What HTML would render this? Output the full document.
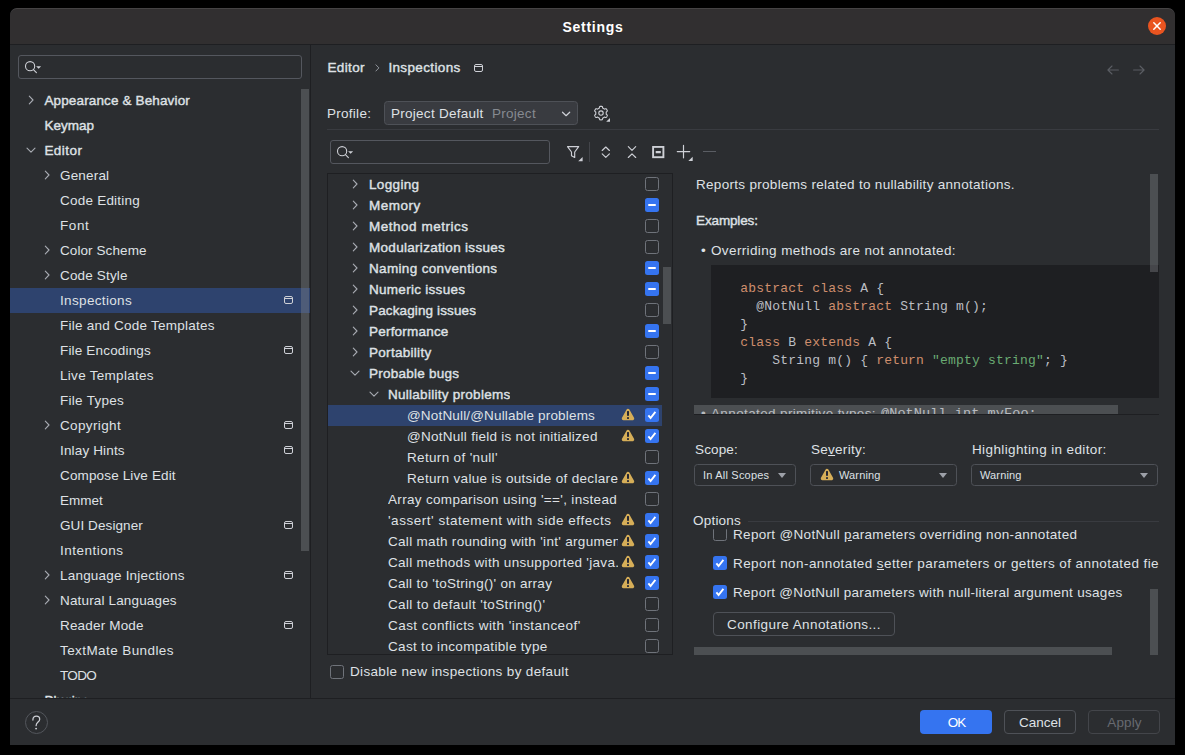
<!DOCTYPE html>
<html><head><meta charset="utf-8"><title>Settings</title>
<style>
*{box-sizing:border-box;margin:0;padding:0}
html,body{width:1185px;height:755px;background:#000;overflow:hidden}
body{font-family:"Liberation Sans",sans-serif;font-size:13.5px;color:#dfe1e5;position:relative}
#w{position:absolute;left:10px;top:8px;width:1165px;height:737px;background:#2b2d30;border-radius:7px 7px 0 0;overflow:hidden}
#p{position:absolute;left:-10px;top:-8px;width:1185px;height:755px}
#p>*{position:absolute}
.abs{position:absolute}
#tb{left:10px;top:8px;width:1165px;height:36px;background:#312f30;border-top:1px solid #454344;border-radius:7px 7px 0 0}
#tbl{left:10px;top:44px;width:1165px;height:1px;background:#1e1f22}
#title{left:10px;top:9px;width:1165px;height:36px;line-height:37px;text-align:center;font-weight:bold;font-size:14px;color:#fff;letter-spacing:0.72px;padding-left:1px}
#close{left:1148px;top:17px;width:18px;height:18px;border-radius:50%;background:#e95420}
.t{white-space:pre;line-height:16px;height:16px;letter-spacing:0.27px}
.b{font-weight:normal;font-size:13.5px;-webkit-text-stroke:0.4px currentColor}
/* sidebar */
#side{left:10px;top:45px;width:300px;height:653px;overflow:hidden}
.srow{position:absolute;left:0;width:300px;height:25px;margin-top:-1px}
.srow.sel{background:#2e436e}
.srow .st{position:absolute;top:0;line-height:25px;white-space:pre;letter-spacing:0.27px}
.srow.b .st{letter-spacing:-0.08px}
.chev,.pi,.warn{position:absolute}
#sdiv{left:310px;top:45px;width:1px;height:653px;background:#1e1f22}
#sscroll{left:301px;top:89px;width:8px;height:462px;background:rgba(128,130,136,0.40)}
.search{border:1px solid #54575e;border-radius:3px;background:#2b2d30}
/* tree */
#tree{left:327px;top:173px;width:346px;height:482px;border:1px solid #1e1f22;overflow:hidden}
#treein{position:absolute;left:0;top:0;width:344px;height:480px;overflow:hidden}
.trow{position:absolute;left:0;width:334px;height:21px}
.trow.sel{background:#2e436e}
.trow .tt{position:absolute;top:0;line-height:21px;white-space:pre;overflow:hidden;letter-spacing:0.27px;height:21px}
.trow.b .tt{letter-spacing:-0.05px}
.cb{position:absolute;width:14px;height:14px;border-radius:2.5px;display:block}
.cb.rel{position:relative;display:inline-block}
.c0{border:1px solid #6f737a;background:transparent}
.c1,.c2{background:#3574f0}
.c1 i{position:absolute;left:3px;top:6px;width:8px;height:2px;background:#fff;border-radius:1px}
.c2 svg{position:absolute;left:0;top:0}
#tscroll{left:663px;top:267px;width:8px;height:57px;background:rgba(128,130,136,0.40)}
/* combos */
.combo{border:1px solid #4e5157;border-radius:3.5px;background:#2b2d30}
.combo .ct{position:absolute;top:0;white-space:pre}
.tri{position:absolute;width:0;height:0;border-left:4.5px solid transparent;border-right:4.5px solid transparent;border-top:5.5px solid #9da0a8}
.btn{border:1px solid #4e5157;border-radius:4px;text-align:center;letter-spacing:0.5px}
.hline{background:#393b40;height:1px}
.sb{background:rgba(128,130,136,0.40)}
/* code */
#code{left:711px;top:265px;width:448px;height:133px;background:#1e1f22}
#code pre{position:absolute;left:29.3px;top:14.6px;font-family:"Liberation Mono",monospace;font-size:13px;line-height:18px;color:#bcbec4;letter-spacing:0.19px}
.k{color:#cf8e6d}.s{color:#6aab73}
</style></head><body>
<div id="w"><div id="p">
<div id="tb"></div><div id="tbl"></div>
<div id="title">Settings</div>
<div id="close"><svg width="18" height="18" viewBox="0 0 18 18" style="position:absolute;left:0;top:0"><path d="M5.8 5.8 L12.2 12.2" stroke="#fff" stroke-width="1.5" stroke-linecap="round" fill="none"/><path d="M12.2 5.8 L5.8 12.2" stroke="#fff" stroke-width="1.5" stroke-linecap="round" fill="none"/></svg></div>

<!-- sidebar search -->
<div class="search" style="left:18px;top:55px;width:284px;height:24px"></div>
<svg style="left:24px;top:60px" width="18" height="15" viewBox="0 0 18 15"><circle cx="6.1" cy="6.2" r="4.6" fill="none" stroke="#ced0d6" stroke-width="1.1"/><path d="M9.4 9.6 L12.4 12.6" stroke="#ced0d6" stroke-width="1.1" stroke-linecap="round"/><path d="M12.1 6.2 H17.1 L14.6 8.8 Z" fill="#ced0d6"/></svg>

<div id="side">
<div class="srow b" style="top:44px"><svg class="chev" width="7" height="10" viewBox="0 0 7 10" style="left:18px;top:7px"><path d="M1.3 1.2 L5.0 5 L1.3 8.8" fill="none" stroke="#a8abb2" stroke-width="1.1" stroke-linecap="round" stroke-linejoin="round"/></svg><span class="st" style="left:34.4px;letter-spacing:0.140px">Appearance &amp; Behavior</span></div>
<div class="srow b" style="top:69px"><span class="st" style="left:34.4px;letter-spacing:0.034px">Keymap</span></div>
<div class="srow b" style="top:94px"><svg class="chev" width="10" height="7" viewBox="0 0 10 7" style="left:16px;top:9px"><path d="M1 1.2 L5 5.2 L9 1.2" fill="none" stroke="#a8abb2" stroke-width="1.1" stroke-linecap="round" stroke-linejoin="round"/></svg><span class="st" style="left:34.4px;letter-spacing:0.464px">Editor</span></div>
<div class="srow" style="top:119px"><svg class="chev" width="7" height="10" viewBox="0 0 7 10" style="left:34px;top:7px"><path d="M1.3 1.2 L5.0 5 L1.3 8.8" fill="none" stroke="#a8abb2" stroke-width="1.1" stroke-linecap="round" stroke-linejoin="round"/></svg><span class="st" style="left:50px;letter-spacing:0.178px">General</span></div>
<div class="srow" style="top:144px"><span class="st" style="left:50px;letter-spacing:0.226px">Code Editing</span></div>
<div class="srow" style="top:169px"><span class="st" style="left:50px;letter-spacing:0.595px">Font</span></div>
<div class="srow" style="top:194px"><svg class="chev" width="7" height="10" viewBox="0 0 7 10" style="left:34px;top:7px"><path d="M1.3 1.2 L5.0 5 L1.3 8.8" fill="none" stroke="#a8abb2" stroke-width="1.1" stroke-linecap="round" stroke-linejoin="round"/></svg><span class="st" style="left:50px;letter-spacing:0.087px">Color Scheme</span></div>
<div class="srow" style="top:219px"><svg class="chev" width="7" height="10" viewBox="0 0 7 10" style="left:34px;top:7px"><path d="M1.3 1.2 L5.0 5 L1.3 8.8" fill="none" stroke="#a8abb2" stroke-width="1.1" stroke-linecap="round" stroke-linejoin="round"/></svg><span class="st" style="left:50px;letter-spacing:0.161px">Code Style</span></div>
<div class="srow sel" style="top:244px"><span class="st" style="left:50px;letter-spacing:0.340px">Inspections</span><svg class="pi" width="10" height="9" viewBox="0 0 10 9" style="left:274px;top:8px"><rect x="0.5" y="0.5" width="8" height="7" rx="1.5" fill="none" stroke="#ced0d6" stroke-width="1"/><path d="M0.5 2.5 H8.5" stroke="#ced0d6" stroke-width="1"/></svg></div>
<div class="srow" style="top:269px"><span class="st" style="left:50px;letter-spacing:0.250px">File and Code Templates</span></div>
<div class="srow" style="top:294px"><span class="st" style="left:50px;letter-spacing:0.172px">File Encodings</span><svg class="pi" width="10" height="9" viewBox="0 0 10 9" style="left:274px;top:8px"><rect x="0.5" y="0.5" width="8" height="7" rx="1.5" fill="none" stroke="#ced0d6" stroke-width="1"/><path d="M0.5 2.5 H8.5" stroke="#ced0d6" stroke-width="1"/></svg></div>
<div class="srow" style="top:319px"><span class="st" style="left:50px;letter-spacing:0.291px">Live Templates</span></div>
<div class="srow" style="top:344px"><span class="st" style="left:50px;letter-spacing:0.280px">File Types</span></div>
<div class="srow" style="top:369px"><svg class="chev" width="7" height="10" viewBox="0 0 7 10" style="left:34px;top:7px"><path d="M1.3 1.2 L5.0 5 L1.3 8.8" fill="none" stroke="#a8abb2" stroke-width="1.1" stroke-linecap="round" stroke-linejoin="round"/></svg><span class="st" style="left:50px;letter-spacing:0.365px">Copyright</span><svg class="pi" width="10" height="9" viewBox="0 0 10 9" style="left:274px;top:8px"><rect x="0.5" y="0.5" width="8" height="7" rx="1.5" fill="none" stroke="#ced0d6" stroke-width="1"/><path d="M0.5 2.5 H8.5" stroke="#ced0d6" stroke-width="1"/></svg></div>
<div class="srow" style="top:394px"><span class="st" style="left:50px;letter-spacing:0.157px">Inlay Hints</span><svg class="pi" width="10" height="9" viewBox="0 0 10 9" style="left:274px;top:8px"><rect x="0.5" y="0.5" width="8" height="7" rx="1.5" fill="none" stroke="#ced0d6" stroke-width="1"/><path d="M0.5 2.5 H8.5" stroke="#ced0d6" stroke-width="1"/></svg></div>
<div class="srow" style="top:419px"><span class="st" style="left:50px;letter-spacing:0.143px">Compose Live Edit</span></div>
<div class="srow" style="top:444px"><span class="st" style="left:50px;letter-spacing:-0.016px">Emmet</span></div>
<div class="srow" style="top:469px"><span class="st" style="left:50px;letter-spacing:0.093px">GUI Designer</span><svg class="pi" width="10" height="9" viewBox="0 0 10 9" style="left:274px;top:8px"><rect x="0.5" y="0.5" width="8" height="7" rx="1.5" fill="none" stroke="#ced0d6" stroke-width="1"/><path d="M0.5 2.5 H8.5" stroke="#ced0d6" stroke-width="1"/></svg></div>
<div class="srow" style="top:494px"><span class="st" style="left:50px;letter-spacing:0.484px">Intentions</span></div>
<div class="srow" style="top:519px"><svg class="chev" width="7" height="10" viewBox="0 0 7 10" style="left:34px;top:7px"><path d="M1.3 1.2 L5.0 5 L1.3 8.8" fill="none" stroke="#a8abb2" stroke-width="1.1" stroke-linecap="round" stroke-linejoin="round"/></svg><span class="st" style="left:50px;letter-spacing:0.202px">Language Injections</span><svg class="pi" width="10" height="9" viewBox="0 0 10 9" style="left:274px;top:8px"><rect x="0.5" y="0.5" width="8" height="7" rx="1.5" fill="none" stroke="#ced0d6" stroke-width="1"/><path d="M0.5 2.5 H8.5" stroke="#ced0d6" stroke-width="1"/></svg></div>
<div class="srow" style="top:544px"><svg class="chev" width="7" height="10" viewBox="0 0 7 10" style="left:34px;top:7px"><path d="M1.3 1.2 L5.0 5 L1.3 8.8" fill="none" stroke="#a8abb2" stroke-width="1.1" stroke-linecap="round" stroke-linejoin="round"/></svg><span class="st" style="left:50px;letter-spacing:0.157px">Natural Languages</span></div>
<div class="srow" style="top:569px"><span class="st" style="left:50px;letter-spacing:0.169px">Reader Mode</span><svg class="pi" width="10" height="9" viewBox="0 0 10 9" style="left:274px;top:8px"><rect x="0.5" y="0.5" width="8" height="7" rx="1.5" fill="none" stroke="#ced0d6" stroke-width="1"/><path d="M0.5 2.5 H8.5" stroke="#ced0d6" stroke-width="1"/></svg></div>
<div class="srow" style="top:594px"><span class="st" style="left:50px;letter-spacing:0.412px">TextMate Bundles</span></div>
<div class="srow" style="top:619px"><span class="st" style="left:50px;letter-spacing:-0.655px">TODO</span></div>
<div class="srow b" style="top:644px"><span class="st" style="left:34.4px;letter-spacing:0.070px">Plugins</span></div>
</div>
<div id="sscroll"></div>
<div id="sdiv"></div>

<!-- breadcrumb -->
<div class="t b" style="left:327.4px;top:59px;line-height:17px;letter-spacing:0.384px">Editor</div>
<svg style="left:375px;top:64px" width="6" height="9" viewBox="0 0 6 9"><path d="M0.9 0.8 L3.9 3.9 L0.9 7.0" fill="none" stroke="#90949b" stroke-width="1.0" stroke-linecap="round" stroke-linejoin="round"/></svg>
<div class="t b" style="left:388.4px;top:59px;line-height:17px;letter-spacing:0.360px">Inspections</div>
<svg style="left:474px;top:64px" width="10" height="9" viewBox="0 0 10 9"><rect x="0.5" y="0.5" width="8" height="7" rx="1.5" fill="none" stroke="#ced0d6" stroke-width="1"/><path d="M0.5 2.5 H8.5" stroke="#ced0d6" stroke-width="1"/></svg>
<!-- nav arrows -->
<svg style="left:1106px;top:64px" width="14" height="12" viewBox="0 0 14 12"><path d="M12.4 6 H2 M6 2 L1.9 6 L6 10" fill="none" stroke="#5a5d63" stroke-width="1.1" stroke-linecap="round" stroke-linejoin="round"/></svg>
<svg style="left:1132px;top:64px" width="14" height="12" viewBox="0 0 14 12"><path d="M1.6 6 H12 M8 2 L12.1 6 L8 10" fill="none" stroke="#5a5d63" stroke-width="1.1" stroke-linecap="round" stroke-linejoin="round"/></svg>

<!-- profile -->
<div class="t" style="left:327px;top:106px">Profile:</div>
<div class="combo" style="left:384px;top:101px;width:194px;height:24px;background:#393b40;border-color:#4e5157">
  <span class="ct" style="left:6px;top:1px;line-height:22px;letter-spacing:0.27px">Project Default</span>
  <span class="ct" style="left:107px;top:1px;line-height:22px;letter-spacing:0.27px;color:#868a91">Project</span>
  <svg style="position:absolute;left:176px;top:9px" width="11" height="7" viewBox="0 0 11 7"><path d="M1.5 1.2 L5.1 4.7 L8.7 1.2" fill="none" stroke="#ced0d6" stroke-width="1.2" stroke-linecap="round" stroke-linejoin="round"/></svg>
</div>
<!-- gear -->
<svg style="left:593px;top:105px" width="19" height="19" viewBox="0 0 19 19"><path d="M13.25 8.10 L13.25 8.28 L13.24 8.47 L13.22 8.65 L13.20 8.83 L13.17 9.01 L13.28 9.22 L13.60 9.50 L13.99 9.82 L14.27 10.14 L14.34 10.41 L14.26 10.63 L14.17 10.85 L14.07 11.06 L13.96 11.27 L13.85 11.47 L13.72 11.68 L13.60 11.87 L13.46 12.07 L13.32 12.26 L13.17 12.44 L12.90 12.51 L12.48 12.43 L12.01 12.25 L11.61 12.11 L11.38 12.12 L11.23 12.24 L11.09 12.35 L10.94 12.45 L10.78 12.55 L10.62 12.65 L10.46 12.74 L10.30 12.82 L10.14 12.90 L9.97 12.97 L9.80 13.04 L9.67 13.24 L9.59 13.65 L9.51 14.15 L9.37 14.55 L9.17 14.75 L8.94 14.78 L8.71 14.81 L8.47 14.83 L8.24 14.85 L8.00 14.85 L7.76 14.85 L7.53 14.83 L7.29 14.81 L7.06 14.78 L6.83 14.75 L6.63 14.55 L6.49 14.15 L6.41 13.65 L6.33 13.24 L6.20 13.04 L6.03 12.97 L5.86 12.90 L5.70 12.82 L5.54 12.74 L5.38 12.65 L5.22 12.55 L5.06 12.45 L4.91 12.35 L4.77 12.24 L4.62 12.12 L4.39 12.11 L3.99 12.25 L3.52 12.43 L3.10 12.51 L2.83 12.44 L2.68 12.26 L2.54 12.07 L2.40 11.87 L2.28 11.68 L2.15 11.47 L2.04 11.27 L1.93 11.06 L1.83 10.85 L1.74 10.63 L1.66 10.41 L1.73 10.14 L2.01 9.82 L2.40 9.50 L2.72 9.22 L2.83 9.01 L2.80 8.83 L2.78 8.65 L2.76 8.47 L2.75 8.28 L2.75 8.10 L2.75 7.92 L2.76 7.73 L2.78 7.55 L2.80 7.37 L2.83 7.19 L2.72 6.98 L2.40 6.70 L2.01 6.38 L1.73 6.06 L1.66 5.79 L1.74 5.57 L1.83 5.35 L1.93 5.14 L2.04 4.93 L2.15 4.72 L2.28 4.52 L2.40 4.33 L2.54 4.13 L2.68 3.94 L2.83 3.76 L3.10 3.69 L3.52 3.77 L3.99 3.95 L4.39 4.09 L4.62 4.08 L4.77 3.96 L4.91 3.85 L5.06 3.75 L5.22 3.65 L5.37 3.55 L5.54 3.46 L5.70 3.38 L5.86 3.30 L6.03 3.23 L6.20 3.16 L6.33 2.96 L6.41 2.55 L6.49 2.05 L6.63 1.65 L6.83 1.45 L7.06 1.42 L7.29 1.39 L7.53 1.37 L7.76 1.35 L8.00 1.35 L8.24 1.35 L8.47 1.37 L8.71 1.39 L8.94 1.42 L9.17 1.45 L9.37 1.65 L9.51 2.05 L9.59 2.55 L9.67 2.96 L9.80 3.16 L9.97 3.23 L10.14 3.30 L10.30 3.38 L10.46 3.46 L10.62 3.55 L10.78 3.65 L10.94 3.75 L11.09 3.85 L11.23 3.96 L11.38 4.08 L11.61 4.09 L12.01 3.95 L12.48 3.77 L12.90 3.69 L13.17 3.76 L13.32 3.94 L13.46 4.13 L13.60 4.33 L13.72 4.52 L13.85 4.72 L13.96 4.93 L14.07 5.14 L14.17 5.35 L14.26 5.57 L14.34 5.79 L14.27 6.06 L13.99 6.38 L13.60 6.70 L13.28 6.98 L13.17 7.19 L13.20 7.37 L13.22 7.55 L13.24 7.73 L13.25 7.92 Z" fill="none" stroke="#ced0d6" stroke-width="1.1" stroke-linejoin="round"/><circle cx="8.0" cy="8.1" r="2.2" fill="none" stroke="#ced0d6" stroke-width="1.1"/><path d="M17 13 V16.8 H13.2 Z" fill="#ced0d6"/></svg>
<div class="hline" style="left:327px;top:129px;width:832px"></div>

<!-- tree toolbar -->
<div class="search" style="left:330px;top:140px;width:220px;height:24px"></div>
<svg style="left:336px;top:145px" width="18" height="15" viewBox="0 0 18 15"><circle cx="6.1" cy="6.2" r="4.6" fill="none" stroke="#ced0d6" stroke-width="1.1"/><path d="M9.4 9.6 L12.4 12.6" stroke="#ced0d6" stroke-width="1.1" stroke-linecap="round"/><path d="M12.1 6.2 H17.1 L14.6 8.8 Z" fill="#ced0d6"/></svg>
<!-- filter -->
<svg style="left:566px;top:145px" width="18" height="18" viewBox="0 0 18 18"><path d="M1.5 1.6 H12.7 L8.7 7 V12.4 L5.5 10.7 V7 Z" fill="none" stroke="#ced0d6" stroke-width="1.15" stroke-linejoin="round"/><path d="M16.6 11.9 V16.3 H12.2 Z" fill="#ced0d6"/></svg>
<div style="left:589px;top:142px;width:1px;height:20px;background:#43454a"></div>
<!-- expand all -->
<svg style="left:600px;top:145px" width="12" height="14" viewBox="0 0 12 14"><path d="M2.2 5.5 L5.8 2.0 L9.4 5.5 M2.2 8.9 L5.8 12.4 L9.4 8.9" fill="none" stroke="#ced0d6" stroke-width="1.15" stroke-linecap="round" stroke-linejoin="round"/></svg>
<!-- collapse all -->
<svg style="left:626px;top:145px" width="12" height="14" viewBox="0 0 12 14"><path d="M2.3 1.7 L6 5.4 L9.7 1.7 M2.3 12.5 L6 8.8 L9.7 12.5" fill="none" stroke="#ced0d6" stroke-width="1.15" stroke-linecap="round" stroke-linejoin="round"/></svg>
<!-- square minus -->
<svg style="left:652px;top:146px" width="13" height="13" viewBox="0 0 13 13"><rect x="1.1" y="0.9" width="10.3" height="10.3" fill="none" stroke="#ced0d6" stroke-width="1.9"/><path d="M3.7 6.05 H8.8" stroke="#ced0d6" stroke-width="2.2"/></svg>
<!-- plus -->
<svg style="left:676px;top:144px" width="18" height="19" viewBox="0 0 18 19"><path d="M7.5 1.4 V13.8 M1.3 7.6 H13.7" stroke="#ced0d6" stroke-width="1.2" stroke-linecap="round"/><path d="M16.7 12.7 V17.1 H12.3 Z" fill="#ced0d6"/></svg>
<div style="left:703px;top:151px;width:13px;height:1px;background:#5a5d63"></div>

<div id="tree"><div id="treein">
<div class="trow b" style="top:0px"><svg class="chev" width="7" height="10" viewBox="0 0 7 10" style="left:24px;top:5px"><path d="M1.3 1.2 L5.0 5 L1.3 8.8" fill="none" stroke="#a8abb2" stroke-width="1.1" stroke-linecap="round" stroke-linejoin="round"/></svg><span class="tt" style="left:41px;max-width:260px;letter-spacing:0.340px">Logging</span><span class="cb c0" style="left:317px;top:3px"></span></div>
<div class="trow b" style="top:21px"><svg class="chev" width="7" height="10" viewBox="0 0 7 10" style="left:24px;top:5px"><path d="M1.3 1.2 L5.0 5 L1.3 8.8" fill="none" stroke="#a8abb2" stroke-width="1.1" stroke-linecap="round" stroke-linejoin="round"/></svg><span class="tt" style="left:41px;max-width:260px;letter-spacing:0.507px">Memory</span><span class="cb c1" style="left:317px;top:3px"><i></i></span></div>
<div class="trow b" style="top:42px"><svg class="chev" width="7" height="10" viewBox="0 0 7 10" style="left:24px;top:5px"><path d="M1.3 1.2 L5.0 5 L1.3 8.8" fill="none" stroke="#a8abb2" stroke-width="1.1" stroke-linecap="round" stroke-linejoin="round"/></svg><span class="tt" style="left:41px;max-width:260px;letter-spacing:0.517px">Method metrics</span><span class="cb c0" style="left:317px;top:3px"></span></div>
<div class="trow b" style="top:63px"><svg class="chev" width="7" height="10" viewBox="0 0 7 10" style="left:24px;top:5px"><path d="M1.3 1.2 L5.0 5 L1.3 8.8" fill="none" stroke="#a8abb2" stroke-width="1.1" stroke-linecap="round" stroke-linejoin="round"/></svg><span class="tt" style="left:41px;max-width:260px;letter-spacing:0.299px">Modularization issues</span><span class="cb c0" style="left:317px;top:3px"></span></div>
<div class="trow b" style="top:84px"><svg class="chev" width="7" height="10" viewBox="0 0 7 10" style="left:24px;top:5px"><path d="M1.3 1.2 L5.0 5 L1.3 8.8" fill="none" stroke="#a8abb2" stroke-width="1.1" stroke-linecap="round" stroke-linejoin="round"/></svg><span class="tt" style="left:41px;max-width:260px;letter-spacing:0.340px">Naming conventions</span><span class="cb c1" style="left:317px;top:3px"><i></i></span></div>
<div class="trow b" style="top:105px"><svg class="chev" width="7" height="10" viewBox="0 0 7 10" style="left:24px;top:5px"><path d="M1.3 1.2 L5.0 5 L1.3 8.8" fill="none" stroke="#a8abb2" stroke-width="1.1" stroke-linecap="round" stroke-linejoin="round"/></svg><span class="tt" style="left:41px;max-width:260px;letter-spacing:0.286px">Numeric issues</span><span class="cb c1" style="left:317px;top:3px"><i></i></span></div>
<div class="trow b" style="top:126px"><svg class="chev" width="7" height="10" viewBox="0 0 7 10" style="left:24px;top:5px"><path d="M1.3 1.2 L5.0 5 L1.3 8.8" fill="none" stroke="#a8abb2" stroke-width="1.1" stroke-linecap="round" stroke-linejoin="round"/></svg><span class="tt" style="left:41px;max-width:260px;letter-spacing:0.129px">Packaging issues</span><span class="cb c0" style="left:317px;top:3px"></span></div>
<div class="trow b" style="top:147px"><svg class="chev" width="7" height="10" viewBox="0 0 7 10" style="left:24px;top:5px"><path d="M1.3 1.2 L5.0 5 L1.3 8.8" fill="none" stroke="#a8abb2" stroke-width="1.1" stroke-linecap="round" stroke-linejoin="round"/></svg><span class="tt" style="left:41px;max-width:260px;letter-spacing:0.210px">Performance</span><span class="cb c1" style="left:317px;top:3px"><i></i></span></div>
<div class="trow b" style="top:168px"><svg class="chev" width="7" height="10" viewBox="0 0 7 10" style="left:24px;top:5px"><path d="M1.3 1.2 L5.0 5 L1.3 8.8" fill="none" stroke="#a8abb2" stroke-width="1.1" stroke-linecap="round" stroke-linejoin="round"/></svg><span class="tt" style="left:41px;max-width:260px;letter-spacing:0.292px">Portability</span><span class="cb c0" style="left:317px;top:3px"></span></div>
<div class="trow b" style="top:189px"><svg class="chev" width="10" height="7" viewBox="0 0 10 7" style="left:22px;top:7px"><path d="M1 1.2 L5 5.2 L9 1.2" fill="none" stroke="#a8abb2" stroke-width="1.1" stroke-linecap="round" stroke-linejoin="round"/></svg><span class="tt" style="left:41px;max-width:260px;letter-spacing:0.252px">Probable bugs</span><span class="cb c1" style="left:317px;top:3px"><i></i></span></div>
<div class="trow b" style="top:210px"><svg class="chev" width="10" height="7" viewBox="0 0 10 7" style="left:41px;top:7px"><path d="M1 1.2 L5 5.2 L9 1.2" fill="none" stroke="#a8abb2" stroke-width="1.1" stroke-linecap="round" stroke-linejoin="round"/></svg><span class="tt" style="left:60px;max-width:260px;letter-spacing:0.271px">Nullability problems</span><span class="cb c1" style="left:317px;top:3px"><i></i></span></div>
<div class="trow sel" style="top:231px"><span class="tt" style="left:79px;max-width:211px;letter-spacing:0.166px">@NotNull/@Nullable problems</span><svg class="warn" width="14" height="13" viewBox="0 0 14 13" style="left:293px;top:3px"><path d="M7 2.4 L11.65 10.6 H2.35 Z" fill="#d6ae58" stroke="#d6ae58" stroke-width="3.2" stroke-linejoin="round"/><rect x="6.05" y="3.1" width="1.9" height="4.7" fill="#1e2132"/><rect x="6.05" y="9.2" width="1.9" height="1.7" fill="#1e2132"/></svg><span class="cb c2" style="left:317px;top:3px"><svg width="14" height="14" viewBox="0 0 14 14"><path d="M3.4 7.3 L5.6 10.0 L10.4 3.9" fill="none" stroke="#fff" stroke-width="1.9" stroke-linecap="butt" stroke-linejoin="miter"/></svg></span></div>
<div class="trow" style="top:252px"><span class="tt" style="left:79px;max-width:211px;letter-spacing:0.269px">@NotNull field is not initialized</span><svg class="warn" width="14" height="13" viewBox="0 0 14 13" style="left:293px;top:3px"><path d="M7 2.4 L11.65 10.6 H2.35 Z" fill="#d6ae58" stroke="#d6ae58" stroke-width="3.2" stroke-linejoin="round"/><rect x="6.05" y="3.1" width="1.9" height="4.7" fill="#1e2132"/><rect x="6.05" y="9.2" width="1.9" height="1.7" fill="#1e2132"/></svg><span class="cb c2" style="left:317px;top:3px"><svg width="14" height="14" viewBox="0 0 14 14"><path d="M3.4 7.3 L5.6 10.0 L10.4 3.9" fill="none" stroke="#fff" stroke-width="1.9" stroke-linecap="butt" stroke-linejoin="miter"/></svg></span></div>
<div class="trow" style="top:273px"><span class="tt" style="left:79px;max-width:211px;letter-spacing:0.336px">Return of 'null'</span><span class="cb c0" style="left:317px;top:3px"></span></div>
<div class="trow" style="top:294px"><span class="tt" style="left:79px;max-width:211px;letter-spacing:0.319px">Return value is outside of declared range</span><svg class="warn" width="14" height="13" viewBox="0 0 14 13" style="left:293px;top:3px"><path d="M7 2.4 L11.65 10.6 H2.35 Z" fill="#d6ae58" stroke="#d6ae58" stroke-width="3.2" stroke-linejoin="round"/><rect x="6.05" y="3.1" width="1.9" height="4.7" fill="#1e2132"/><rect x="6.05" y="9.2" width="1.9" height="1.7" fill="#1e2132"/></svg><span class="cb c2" style="left:317px;top:3px"><svg width="14" height="14" viewBox="0 0 14 14"><path d="M3.4 7.3 L5.6 10.0 L10.4 3.9" fill="none" stroke="#fff" stroke-width="1.9" stroke-linecap="butt" stroke-linejoin="miter"/></svg></span></div>
<div class="trow" style="top:315px"><span class="tt" style="left:60px;max-width:230px;letter-spacing:0.322px">Array comparison using '==', instead of 'Arrays.equals()'</span><span class="cb c0" style="left:317px;top:3px"></span></div>
<div class="trow" style="top:336px"><span class="tt" style="left:60px;max-width:230px;letter-spacing:0.529px">'assert' statement with side effects</span><svg class="warn" width="14" height="13" viewBox="0 0 14 13" style="left:293px;top:3px"><path d="M7 2.4 L11.65 10.6 H2.35 Z" fill="#d6ae58" stroke="#d6ae58" stroke-width="3.2" stroke-linejoin="round"/><rect x="6.05" y="3.1" width="1.9" height="4.7" fill="#1e2132"/><rect x="6.05" y="9.2" width="1.9" height="1.7" fill="#1e2132"/></svg><span class="cb c2" style="left:317px;top:3px"><svg width="14" height="14" viewBox="0 0 14 14"><path d="M3.4 7.3 L5.6 10.0 L10.4 3.9" fill="none" stroke="#fff" stroke-width="1.9" stroke-linecap="butt" stroke-linejoin="miter"/></svg></span></div>
<div class="trow" style="top:357px"><span class="tt" style="left:60px;max-width:230px;letter-spacing:0.307px">Call math rounding with 'int' argument</span><svg class="warn" width="14" height="13" viewBox="0 0 14 13" style="left:293px;top:3px"><path d="M7 2.4 L11.65 10.6 H2.35 Z" fill="#d6ae58" stroke="#d6ae58" stroke-width="3.2" stroke-linejoin="round"/><rect x="6.05" y="3.1" width="1.9" height="4.7" fill="#1e2132"/><rect x="6.05" y="9.2" width="1.9" height="1.7" fill="#1e2132"/></svg><span class="cb c2" style="left:317px;top:3px"><svg width="14" height="14" viewBox="0 0 14 14"><path d="M3.4 7.3 L5.6 10.0 L10.4 3.9" fill="none" stroke="#fff" stroke-width="1.9" stroke-linecap="butt" stroke-linejoin="miter"/></svg></span></div>
<div class="trow" style="top:378px"><span class="tt" style="left:60px;max-width:230px;letter-spacing:0.308px">Call methods with unsupported 'java.time.temporal.ChronoUnit'</span><svg class="warn" width="14" height="13" viewBox="0 0 14 13" style="left:293px;top:3px"><path d="M7 2.4 L11.65 10.6 H2.35 Z" fill="#d6ae58" stroke="#d6ae58" stroke-width="3.2" stroke-linejoin="round"/><rect x="6.05" y="3.1" width="1.9" height="4.7" fill="#1e2132"/><rect x="6.05" y="9.2" width="1.9" height="1.7" fill="#1e2132"/></svg><span class="cb c2" style="left:317px;top:3px"><svg width="14" height="14" viewBox="0 0 14 14"><path d="M3.4 7.3 L5.6 10.0 L10.4 3.9" fill="none" stroke="#fff" stroke-width="1.9" stroke-linecap="butt" stroke-linejoin="miter"/></svg></span></div>
<div class="trow" style="top:399px"><span class="tt" style="left:60px;max-width:230px;letter-spacing:0.283px">Call to 'toString()' on array</span><svg class="warn" width="14" height="13" viewBox="0 0 14 13" style="left:293px;top:3px"><path d="M7 2.4 L11.65 10.6 H2.35 Z" fill="#d6ae58" stroke="#d6ae58" stroke-width="3.2" stroke-linejoin="round"/><rect x="6.05" y="3.1" width="1.9" height="4.7" fill="#1e2132"/><rect x="6.05" y="9.2" width="1.9" height="1.7" fill="#1e2132"/></svg><span class="cb c2" style="left:317px;top:3px"><svg width="14" height="14" viewBox="0 0 14 14"><path d="M3.4 7.3 L5.6 10.0 L10.4 3.9" fill="none" stroke="#fff" stroke-width="1.9" stroke-linecap="butt" stroke-linejoin="miter"/></svg></span></div>
<div class="trow" style="top:420px"><span class="tt" style="left:60px;max-width:230px;letter-spacing:0.371px">Call to default 'toString()'</span><span class="cb c0" style="left:317px;top:3px"></span></div>
<div class="trow" style="top:441px"><span class="tt" style="left:60px;max-width:230px;letter-spacing:0.446px">Cast conflicts with 'instanceof'</span><span class="cb c0" style="left:317px;top:3px"></span></div>
<div class="trow" style="top:462px"><span class="tt" style="left:60px;max-width:230px;letter-spacing:0.321px">Cast to incompatible type</span><span class="cb c0" style="left:317px;top:3px"></span></div>
</div></div>
<div id="tscroll"></div>

<!-- disable checkbox -->
<span class="cb c0" style="left:330px;top:664.5px"></span>
<div class="t" style="left:350px;top:663.5px;letter-spacing:0.342px">Disable new inspections by default</div>

<!-- description -->
<div class="t" style="left:696px;top:177px;letter-spacing:0.303px">Reports problems related to nullability annotations.</div>
<div class="t b" style="left:696px;top:212.5px;letter-spacing:-0.129px">Examples:</div>
<div class="t" style="left:701px;top:243px">•</div>
<div class="t" style="left:711px;top:243px;letter-spacing:0.373px">Overriding methods are not annotated:</div>
<div id="code"><pre><span class="k">abstract class</span> A {
  @NotNull <span class="k">abstract</span> String m();
}
<span class="k">class</span> B <span class="k">extends</span> A {
    String m() { <span class="k">return</span> <span class="s">"empty string"</span>; }
}</pre></div>
<div class="abs" style="left:694px;top:398px;width:465px;height:16px;overflow:hidden">
  <div class="t" style="position:absolute;left:7px;top:8px">•</div>
  <div class="t" style="position:absolute;left:17px;top:8px;letter-spacing:0.370px">Annotated primitive types:</div>
  <div class="t" style="position:absolute;left:187px;top:8px;font-family:'Liberation Mono',monospace;letter-spacing:0.1px">@NotNull int myFoo;</div>
</div>
<div class="sb" style="left:694px;top:405px;width:424px;height:9px"></div>
<div class="sb" style="left:1150px;top:174px;width:8px;height:98px"></div>
<div style="left:694px;top:414px;width:465px;height:1px;background:#1e1f22"></div>

<!-- scope row -->
<div class="t" style="left:695px;top:442px;letter-spacing:0.134px">Scope:</div>
<div class="t" style="left:811px;top:442px">Se<u>v</u>erity:</div>
<div class="t" style="left:972px;top:442px;letter-spacing:0.374px">Highlighting in editor:</div>
<div class="combo" style="left:694px;top:464px;width:102px;height:22px">
  <span class="ct" style="left:8px;line-height:20px;font-size:11px;letter-spacing:0.209px">In All Scopes</span>
  <span class="tri" style="left:83px;top:8px"></span>
</div>
<div class="combo" style="left:810px;top:464px;width:147px;height:22px">
  <svg class="warn" width="14" height="13" viewBox="0 0 14 13" style="left:9px;top:3px"><path d="M7 2.4 L11.65 10.6 H2.35 Z" fill="#d6ae58" stroke="#d6ae58" stroke-width="3.2" stroke-linejoin="round"/><rect x="6.05" y="3.1" width="1.9" height="4.7" fill="#1e2132"/><rect x="6.05" y="9.2" width="1.9" height="1.7" fill="#1e2132"/></svg>
  <span class="ct" style="left:28px;line-height:20px;font-size:11px;letter-spacing:0.140px">Warning</span>
  <span class="tri" style="left:128px;top:8px"></span>
</div>
<div class="combo" style="left:971px;top:464px;width:187px;height:22px">
  <span class="ct" style="left:8px;line-height:20px;font-size:11px;letter-spacing:0.140px">Warning</span>
  <span class="tri" style="left:168px;top:8px"></span>
</div>

<!-- options -->
<div class="t" style="left:693px;top:513px;letter-spacing:0.211px">Options</div>
<div class="hline" style="left:748px;top:521px;width:411px"></div>
<div class="abs" style="left:694px;top:529px;width:465px;height:126px;overflow:hidden">
  <span class="cb c0" style="left:19px;top:-2px"></span>
  <div class="t" style="position:absolute;left:39px;top:-2px;letter-spacing:0.317px">Report @NotNull <u>p</u>arameters overriding non-annotated</div>
  <span style="position:absolute;left:19px;top:27px"><span class="cb rel c2" style="left:0px;top:0px"><svg width="14" height="14" viewBox="0 0 14 14"><path d="M3.4 7.3 L5.6 10.0 L10.4 3.9" fill="none" stroke="#fff" stroke-width="1.9" stroke-linecap="butt" stroke-linejoin="miter"/></svg></span></span>
  <div class="t" style="position:absolute;left:39px;top:26.5px;letter-spacing:0.417px">Report non-annotated <u>s</u>etter parameters or getters of annotated fields</div>
  <span style="position:absolute;left:19px;top:56px"><span class="cb rel c2" style="left:0px;top:0px"><svg width="14" height="14" viewBox="0 0 14 14"><path d="M3.4 7.3 L5.6 10.0 L10.4 3.9" fill="none" stroke="#fff" stroke-width="1.9" stroke-linecap="butt" stroke-linejoin="miter"/></svg></span></span>
  <div class="t" style="position:absolute;left:39px;top:56px;letter-spacing:0.298px">Report @NotNull parameters with null-literal argument usages</div>
  <div class="btn" style="position:absolute;left:19px;top:83px;width:182px;height:24px;line-height:23px;letter-spacing:0"><span style="letter-spacing:0.408px">Configure Annotations...</span></div>
</div>
<div class="sb" style="left:694px;top:647px;width:418px;height:8px"></div>
<div class="sb" style="left:1150px;top:589px;width:8px;height:66px"></div>

<!-- bottom -->
<div style="left:10px;top:698px;width:1165px;height:1px;background:#1e1f22"></div>
<div style="left:25px;top:711px;width:23px;height:23px;border:1px solid #53565c;border-radius:50%"></div>
<svg style="left:25px;top:711px" width="23" height="23" viewBox="0 0 23 23"><path d="M7.9 9.0 C7.9 6.5 9.5 5.1 11.4 5.1 C13.3 5.1 14.7 6.4 14.7 8.2 C14.7 11.2 11.1 11.0 11.1 14.7" fill="none" stroke="#ced0d6" stroke-width="1.25" stroke-linecap="round"/><circle cx="11.1" cy="17.6" r="0.95" fill="#ced0d6"/></svg>
<div class="btn" style="left:920px;top:710px;width:72px;height:24px;line-height:26px;background:#3574f0;border:none;color:#fff;letter-spacing:0;padding-left:1px"><span style="letter-spacing:-1.016px">OK</span></div>
<div class="btn" style="left:1004px;top:710px;width:72px;height:24px;line-height:24px;letter-spacing:0"><span style="letter-spacing:-0.006px">Cancel</span></div>
<div class="btn" style="left:1088px;top:710px;width:72px;height:24px;line-height:24px;color:#676a70;border-color:#43454a;letter-spacing:0;padding-left:1px"><span style="letter-spacing:0.155px">Apply</span></div>
</div></div>
</body></html>
